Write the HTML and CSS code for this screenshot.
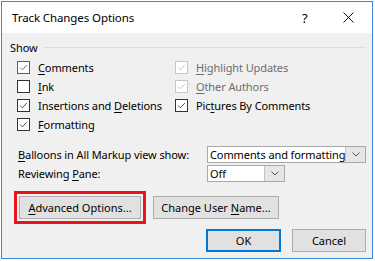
FILE: index.html
```html
<!DOCTYPE html>
<html lang="en">
<head>
  <meta charset="UTF-8">
  <title>Track Changes Options</title>
  <link rel="stylesheet" href="styles.css">
</head>
<body>
  <div class="window">
    <div class="titlebar">
      <span class="title">Track Changes Options</span>
      <span class="help">?</span>
      <span class="close">
        <svg width="11" height="11" viewBox="0 0 11 11"><path d="M0.5 0.5 L10.5 10.5 M10.5 0.5 L0.5 10.5" stroke="#111" stroke-width="1" fill="none"/></svg>
      </span>
    </div>

    <div class="content">
      <div class="group-head">
        <span>Show</span>
        <span class="rule"></span>
      </div>

      <div class="checks">
        <label class="check focus"><span class="box"><svg viewBox="0 0 13 13"><path d="M2.5 6.5 L5.2 9.2 L10.5 3.5"/></svg></span><span><u>C</u>omments</span></label>
        <label class="check disabled"><span class="box"><svg viewBox="0 0 13 13"><path d="M2.5 6.5 L5.2 9.2 L10.5 3.5"/></svg></span><span><u>H</u>ighlight Updates</span></label>
        <label class="check"><span class="box"></span><span><u>I</u>nk</span></label>
        <label class="check disabled"><span class="box"><svg viewBox="0 0 13 13"><path d="M2.5 6.5 L5.2 9.2 L10.5 3.5"/></svg></span><span><u>O</u>ther Authors</span></label>
        <label class="check"><span class="box"><svg viewBox="0 0 13 13"><path d="M2.5 6.5 L5.2 9.2 L10.5 3.5"/></svg></span><span>Insertions and <u>D</u>eletions</span></label>
        <label class="check"><span class="box"><svg viewBox="0 0 13 13"><path d="M2.5 6.5 L5.2 9.2 L10.5 3.5"/></svg></span><span>Pic<u>t</u>ures By Comments</span></label>
        <label class="check"><span class="box"><svg viewBox="0 0 13 13"><path d="M2.5 6.5 L5.2 9.2 L10.5 3.5"/></svg></span><span><u>F</u>ormatting</span></label>
      </div>

      <div class="field first">
        <span class="field-label"><u>B</u>alloons in All Markup view show:</span>
        <span class="combo wide"><span class="value">Comments and formatting</span><span class="arrow"><svg width="8" height="5" viewBox="0 0 8 5"><path d="M0.5 0.5 L4 4 L7.5 0.5"/></svg></span></span>
      </div>
      <div class="field">
        <span class="field-label">Reviewing <u>P</u>ane:</span>
        <span class="combo narrow"><span class="value">Off</span><span class="arrow"><svg width="8" height="5" viewBox="0 0 8 5"><path d="M0.5 0.5 L4 4 L7.5 0.5"/></svg></span></span>
      </div>

      <div class="buttons-top">
        <button class="btn advanced"><u>A</u>dvanced Options...</button>
        <button class="btn username">Change User <u>N</u>ame...</button>
      </div>
      <div class="buttons-bottom">
        <button class="btn ok">OK</button>
        <button class="btn cancel">Cancel</button>
      </div>
    </div>
  </div>
</body>
</html>
```

FILE: styles.css
```css
body { margin: 0; background: #fff; font-family: "Noto Sans", "Open Sans", sans-serif; font-size: 11px; letter-spacing: -0.1px; color: #000; }
u { text-decoration-thickness: 1px; text-underline-offset: 2px; }

.window { width: 370px; height: 256px; margin: 1px 0 0 1px; border: 1px solid #3b8ad6; background: #f0f0f0; display: flex; flex-direction: column; }

.titlebar { height: 31px; background: #fff; display: flex; align-items: center; padding-left: 10px; }
.title { font-size: 11.5px; flex: 1; }
.help { width: 10px; font-size: 13px; margin-right: 31px; }
.close { display: flex; margin-right: 18px; }

.content { padding: 6px 6px 0 8px; display: flex; flex-direction: column; }

.group-head { display: flex; align-items: center; height: 16px; gap: 6px; }
.rule { flex: 1; height: 1px; background: #dcdcdc; }

.checks { display: grid; grid-template-columns: 158px 1fr; grid-auto-rows: 19px; margin-top: 3px; padding-left: 7px; }
.check { display: flex; align-items: center; gap: 8px; }
.box { width: 11px; height: 11px; border: 1px solid #333; background: #fff; display: flex; }
.box svg { width: 11px; height: 11px; fill: none; stroke: #333; stroke-width: 1; }
.check.focus .box { border-color: #0078d7; }
.check.focus .box svg { stroke: #0078d7; }
.check.disabled { color: #6d6d6d; }
.check.disabled .box { border-color: #c6c6c6; }
.check.disabled .box svg { stroke: #bcbcbc; }

.field { display: flex; align-items: center; height: 17px; margin-top: 2px; padding-left: 8px; }
.field.first { margin-top: 12px; }
.field-label { width: 189px; }
.combo { display: flex; height: 17px; box-sizing: border-box; border: 1px solid #a8a8a8; background: #fff; }
.combo.wide { width: 159px; }
.combo.narrow { width: 78px; }
.value { flex: 1; padding-left: 2px; line-height: 15px; white-space: nowrap; }
.arrow { width: 19px; background: #e6e6e6; border-left: 1px solid #c4c4c4; display: flex; align-items: center; justify-content: center; }
.arrow svg { fill: none; stroke: #555; stroke-width: 1; }

.btn { font: inherit; color: #000; background: #e1e1e1; border: 1px solid #adadad; height: 23px; padding: 0; box-sizing: border-box; }
.buttons-top { display: flex; gap: 12px; margin-top: 14px; padding-left: 9px; }
.advanced { width: 122px; outline: 3px solid #e8141c; outline-offset: 2px; }
.username { width: 126px; }
.buttons-bottom { display: flex; justify-content: flex-end; gap: 11px; margin-top: 10px; }
.ok { width: 75px; border: 2px solid #0078d7; }
.cancel { width: 74px; }
```
